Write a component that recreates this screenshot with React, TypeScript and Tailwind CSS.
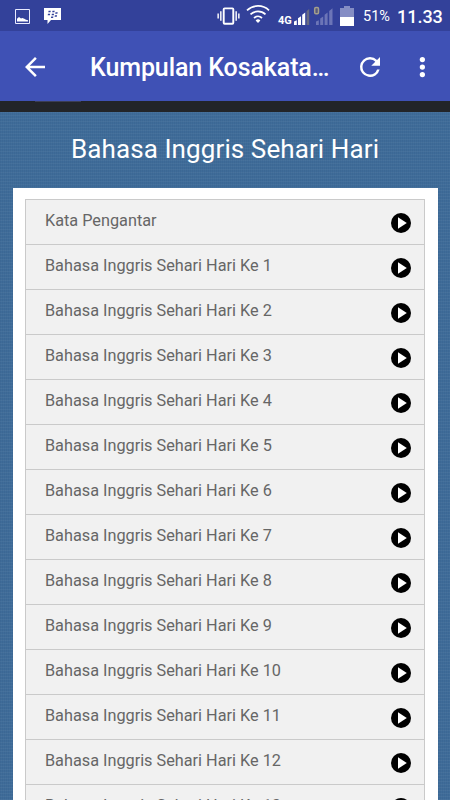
import type { ReactNode } from 'react'

const lessons = [
  'Kata Pengantar',
  ...Array.from({ length: 13 }, (_, i) => `Bahasa Inggris Sehari Hari Ke ${i + 1}`),
]

function StatusBar() {
  return (
    <div className="flex h-[31px] shrink-0 items-center bg-[#33419a] text-white">
      <svg className="ml-[15px] mt-px h-[15px] w-[15px] shrink-0" viewBox="0 0 15 15">
        <path fill="none" stroke="#e8eaff" d="M.5.5h14v14H.5z" />
        <path fill="#fff" d="M2 12.5V9.8l2-1.9 2 1.6 1.3-.6 2 .9 1.7 1 2 .4v1.3z" />
      </svg>
      <svg className="ml-[14px] mt-px h-4 w-[17px] shrink-0" viewBox="0 0 17 16">
        <path fill="#fff" d="M0 0h17v12H7l-3.5 4v-4H0z" />
        <path
          fill="#33419a"
          d="M4.6 2.7h2.2l-.3 1.5H4.3zM8.5 2.7h2.2l-.3 1.5H8.2zM4 5.7h2.2l-.3 1.5H3.7zM7.9 5.7h2.2l-.3 1.5H7.6zM11.5 4.3h2.2l-.3 1.5h-2.2zM10.9 7.2h2.2l-.3 1.5h-2.2zM7.2 8.5h2.2L9.1 10H6.9z"
        />
      </svg>

      <svg className="ml-[156px] h-[18px] w-[23px] shrink-0" viewBox="0 0 24 18">
        <rect x="7" y="1" width="10" height="16" rx="1" fill="none" stroke="#fff" strokeWidth="2" />
        <path fill="none" stroke="#fff" strokeWidth="1.5" d="M4 4v10M1.2 6.5v5M20 4v10M22.8 6.5v5" />
      </svg>
      <svg className="ml-[6px] mb-[3px] h-[18px] w-[24px] shrink-0" viewBox="0 0 24 18">
        <g fill="none" stroke="#fff" strokeWidth="1.7">
          <path d="M1 5.3a16 16 0 0 1 22 0" />
          <path d="M4.5 9.3a11 11 0 0 1 15 0" />
          <path d="M8 13a6 6 0 0 1 8 0" />
        </g>
        <path fill="#fff" d="M12 18l-2.4-2.6a3.6 3.6 0 0 1 4.8 0z" />
      </svg>
      <span className="ml-[8px] mt-[9px] w-[15px] shrink-0 text-[11px] font-bold leading-none">4G</span>
      <svg className="ml-px h-[21px] w-[42px] shrink-0" viewBox="0 0 42 21">
        <path fill="#fff" d="M0 20v-3.5l2.8-1.3V20zM4 20v-6.7l3-2V20zM8.2 20V9.7l3-2.3V20z" />
        <path fill="#676a82" d="M12.6 20V6l2.6-2v16z" />
        <rect x="20.7" y="2.5" width="3.8" height="6.2" rx="1.2" fill="#57587c" stroke="#a39f8c" strokeWidth="1.5" />
        <path fill="#6c75b7" d="M22 20v-3.5l2.8-1.3V20zM26.2 20v-6.5l3-2V20zM30.6 20V9.7l3-2.3V20zM35.2 20V6l3.3-2.8V20z" />
      </svg>
      <svg className="ml-[4px] h-[20px] w-[14px] shrink-0" viewBox="0 0 14 20">
        <path fill="#858dc4" d="M4 0h6v2h4v9H0V2h4z" />
        <path fill="#fff" d="M0 11h14v9H0z" />
      </svg>
      <span className="ml-[9px] mt-[3px] text-[14.5px] leading-none">51%</span>
      <span className="ml-[7px] mt-[2px] text-[18px] font-medium leading-none">11.33</span>
    </div>
  )
}

function AppBar() {
  return (
    <header className="flex h-[70px] shrink-0 items-center bg-[#3f51b5] text-white">
      <svg className="ml-[20px] mt-px h-[30px] w-[30px] shrink-0" viewBox="0 0 24 24" fill="currentColor">
        <path d="M20 11H7.83l5.59-5.59L12 4l-8 8 8 8 1.41-1.41L7.83 13H20v-2z" />
      </svg>
      <h1 className="ml-[40px] mt-1 w-[240px] whitespace-nowrap text-[25px] font-medium tracking-[-0.1px]">
        Kumpulan Kosakata…
      </h1>
      <svg className="ml-[25px] mt-px h-[30px] w-[30px] shrink-0" viewBox="0 0 24 24" fill="currentColor">
        <path d="M17.65 6.35A7.958 7.958 0 0 0 12 4a8 8 0 1 0 7.73 10h-2.08A5.99 5.99 0 0 1 12 18c-3.31 0-6-2.69-6-6s2.69-6 6-6c1.66 0 3.14.69 4.22 1.78L13 11h7V4l-2.35 2.35z" />
      </svg>
      <svg className="ml-[22px] mt-px h-[30px] w-[30px] shrink-0" viewBox="0 0 24 24" fill="currentColor">
        <circle cx="12.3" cy="6" r="2.1" />
        <circle cx="12.3" cy="12" r="2.1" />
        <circle cx="12.3" cy="18" r="2.1" />
      </svg>
    </header>
  )
}

function LessonRow({ children }: { children: ReactNode }) {
  return (
    <li className="flex h-[45px] items-center justify-between border-b border-[#cacaca] pl-[19px] pr-[13px] text-[#666]">
      <span className="mb-[2px] whitespace-nowrap text-[16.25px]">{children}</span>
      <svg className="mt-px h-5 w-5" viewBox="0 0 20 20">
        <circle cx="10" cy="10" r="10" fill="#000" />
        <path fill="#fff" d="M7 4.3v11.4l8.8-5.7z" />
      </svg>
    </li>
  )
}

export default function App() {
  return (
    <div className="flex h-[800px] w-[450px] flex-col overflow-hidden font-['Roboto',sans-serif]">
      <StatusBar />
      <AppBar />
      <div className="h-[11px] shrink-0 bg-[#222428]">
        <div className="ml-[35px] h-px w-[46px] bg-[#3b3d55]" />
      </div>
      <main className="min-h-0 flex-1 bg-[#3f6c99] bg-[repeating-linear-gradient(0deg,rgba(255,255,255,0.04)_0_1px,transparent_1px_3px),repeating-linear-gradient(90deg,rgba(20,50,90,0.07)_0_1px,transparent_1px_2px)] px-[12.5px]">
        <h2 className="flex h-[76px] items-center justify-center whitespace-nowrap pb-[2px] text-[26px] tracking-[0.1px] text-white">
          Bahasa Inggris Sehari Hari
        </h2>
        <div className="bg-white px-[12.5px] pt-[11px]">
          <ul className="border border-[#cacaca] bg-[#f1f1f1]">
            {lessons.map((lesson) => (
              <LessonRow key={lesson}>{lesson}</LessonRow>
            ))}
          </ul>
        </div>
      </main>
    </div>
  )
}
